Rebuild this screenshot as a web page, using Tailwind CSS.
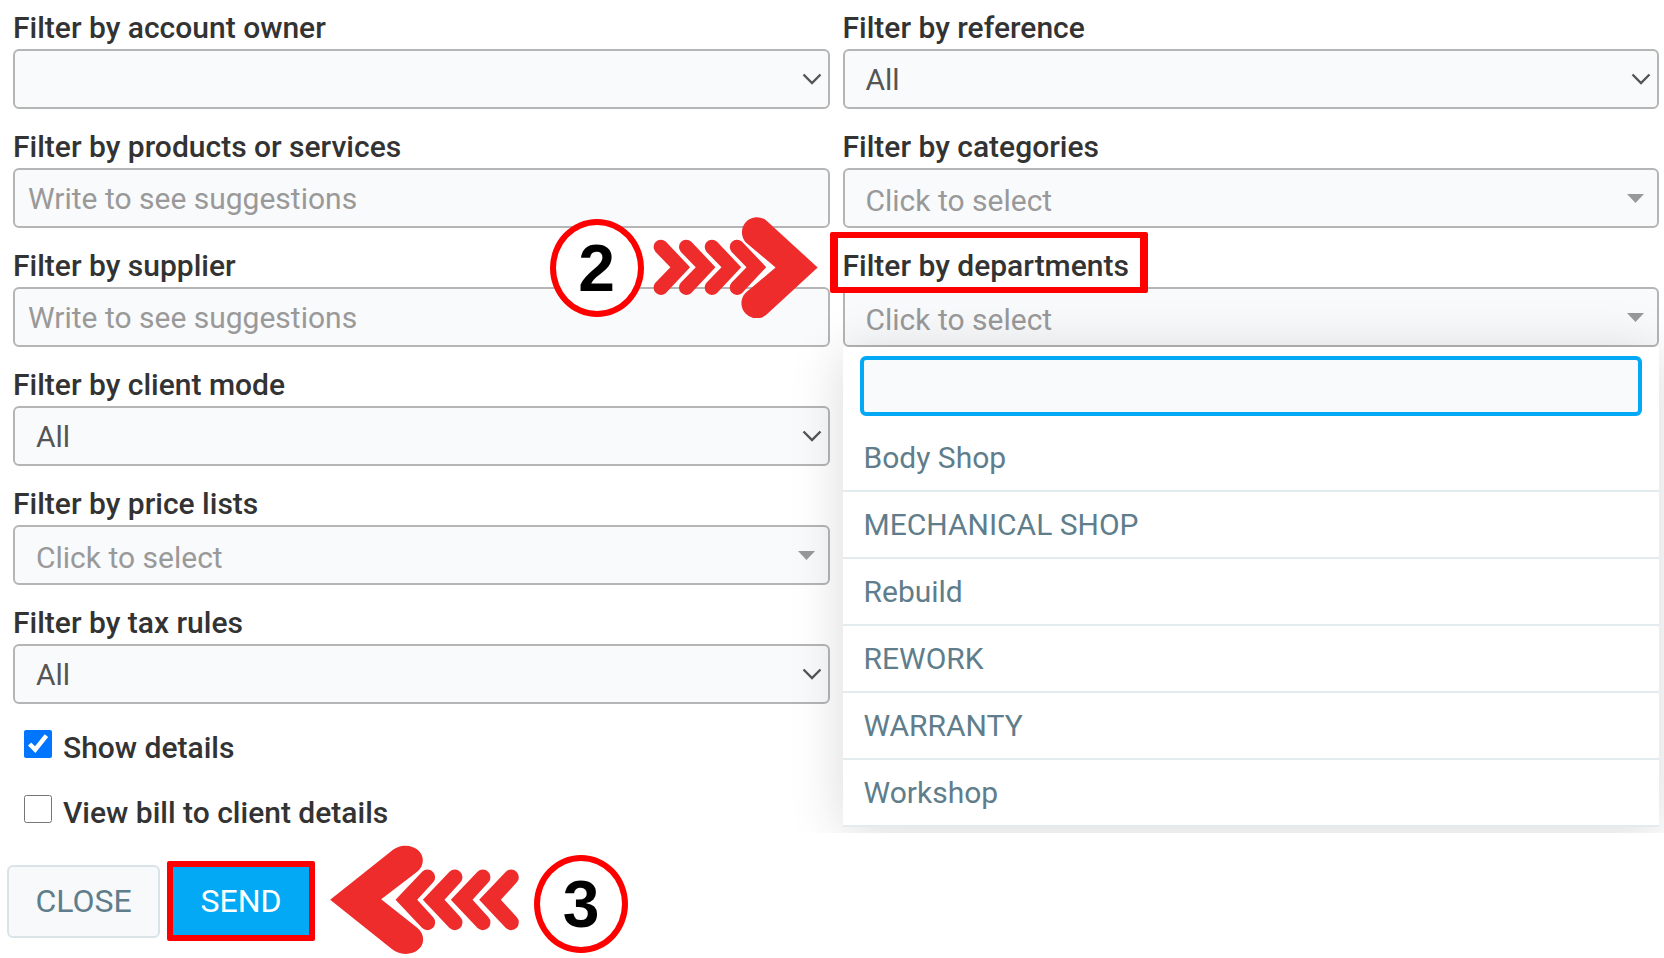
<!DOCTYPE html>
<html lang="en">
  <head>
    <meta charset="UTF-8" />
    <meta name="viewport" content="width=device-width, initial-scale=1.0" />
    <title>Report filters</title>
    <script src="https://cdn.jsdelivr.net/npm/@tailwindcss/browser@4"></script>
  </head>
  <body class="bg-white font-['Roboto',sans-serif] text-[30px] text-[#333333]">
    <!-- Shared shapes -->
    <svg class="hidden">
      <symbol id="chevron" viewBox="0 0 20 12">
        <path d="M1.5 1.5L10 10L18.5 1.5" fill="none" stroke="#555" stroke-width="2.4" />
      </symbol>
      <symbol id="caret" viewBox="0 0 17 9">
        <path d="M0 0H17L8.5 9Z" fill="#999" />
      </symbol>
      <path
        id="dart-right"
        d="M377 123L450 200L377 278A22 22 0 0 1 346 247L391 200L346 154A22 22 0 0 1 377 123Z"
      />
      <path
        id="dart-left"
        d="M258 212L338 128A23 23 0 0 1 371 160L323 212L371 265A23 23 0 0 1 338 297Z"
      />
    </svg>

    <form>
      <div class="overflow-hidden grid grid-cols-2 gap-x-[13px] pt-1.5 pb-2.5 pl-[13px] pr-[5px]">
        <!-- Left column -->
        <div class="flex flex-col gap-4">
          <div>
            <label for="owner" class="block font-medium leading-[43px]">Filter by account owner</label>
            <div class="relative">
              <select
                id="owner"
                class="block w-full h-[60px] appearance-none border-2 border-[#b5b5b5] rounded-md bg-[#f9fafc] px-[21px] text-[#555]"
              >
                <option></option>
              </select>
              <svg class="absolute right-2 top-6 w-5 h-3 pointer-events-none"><use href="#chevron" /></svg>
            </div>
          </div>

          <div>
            <label for="products" class="block font-medium leading-[43px]">Filter by products or services</label>
            <input
              type="text"
              id="products"
              placeholder="Write to see suggestions"
              class="block w-full h-[60px] border-2 border-[#b5b5b5] rounded-md bg-[#f9fafc] px-[13px] placeholder:text-[#999]"
            />
          </div>

          <div>
            <label for="supplier" class="block font-medium leading-[43px]">Filter by supplier</label>
            <input
              type="text"
              id="supplier"
              placeholder="Write to see suggestions"
              class="block w-full h-[60px] border-2 border-[#b5b5b5] rounded-md bg-[#f9fafc] px-[13px] placeholder:text-[#999]"
            />
          </div>

          <div>
            <label for="client-mode" class="block font-medium leading-[43px]">Filter by client mode</label>
            <div class="relative">
              <select
                id="client-mode"
                class="block w-full h-[60px] appearance-none border-2 border-[#b5b5b5] rounded-md bg-[#f9fafc] px-[21px] text-[#555]"
              >
                <option>All</option>
              </select>
              <svg class="absolute right-2 top-6 w-5 h-3 pointer-events-none"><use href="#chevron" /></svg>
            </div>
          </div>

          <div>
            <label for="price-lists" class="block font-medium leading-[43px]">Filter by price lists</label>
            <button
              type="button"
              id="price-lists"
              class="w-full h-[60px] flex items-center justify-between border-2 border-[#b5b5b5] rounded-md bg-[#f9fafc] pl-[21px] pr-[13px] text-[#999]"
            >
              <span class="pt-1">Click to select</span>
              <svg class="w-[17px] h-[9px]"><use href="#caret" /></svg>
            </button>
          </div>

          <div>
            <label for="tax-rules" class="block font-medium leading-[43px]">Filter by tax rules</label>
            <div class="relative">
              <select
                id="tax-rules"
                class="block w-full h-[60px] appearance-none border-2 border-[#b5b5b5] rounded-md bg-[#f9fafc] px-[21px] text-[#555]"
              >
                <option>All</option>
              </select>
              <svg class="absolute right-2 top-6 w-5 h-3 pointer-events-none"><use href="#chevron" /></svg>
            </div>
          </div>

          <div class="flex flex-col gap-[37px] pt-2.5 pl-[11px]">
            <div class="flex items-center gap-[11px] h-7">
              <input type="checkbox" id="show-details" checked class="size-7 accent-[#0075ff]" />
              <label for="show-details" class="font-medium leading-7 pt-2">Show details</label>
            </div>
            <div class="flex items-center gap-[11px] h-7">
              <input type="checkbox" id="bill-to" class="size-7 accent-[#0075ff]" />
              <label for="bill-to" class="font-medium leading-7 pt-2">View bill to client details</label>
            </div>
          </div>
        </div>

        <!-- Right column -->
        <div class="flex flex-col gap-4">
          <div>
            <label for="reference" class="block font-medium leading-[43px]">Filter by reference</label>
            <div class="relative">
              <select
                id="reference"
                class="block w-full h-[60px] appearance-none border-2 border-[#b5b5b5] rounded-md bg-[#f9fafc] px-[21px] text-[#555]"
              >
                <option>All</option>
              </select>
              <svg class="absolute right-2 top-6 w-5 h-3 pointer-events-none"><use href="#chevron" /></svg>
            </div>
          </div>

          <div>
            <label for="categories" class="block font-medium leading-[43px]">Filter by categories</label>
            <button
              type="button"
              id="categories"
              class="w-full h-[60px] flex items-center justify-between border-2 border-[#b5b5b5] rounded-md bg-[#f9fafc] pl-[21px] pr-[13px] text-[#999]"
            >
              <span class="pt-1">Click to select</span>
              <svg class="w-[17px] h-[9px]"><use href="#caret" /></svg>
            </button>
          </div>

          <div class="relative">
            <label for="departments" class="block font-medium leading-[43px]">Filter by departments</label>
            <button
              type="button"
              id="departments"
              aria-expanded="true"
              class="w-full h-[60px] flex items-center justify-between border-2 border-[#b5b5b5] rounded-md bg-[#f9fafc] pl-[21px] pr-[13px] text-[#999]"
            >
              <span class="pt-1">Click to select</span>
              <svg class="w-[17px] h-[9px]"><use href="#caret" /></svg>
            </button>

            <!-- Open department list -->
            <div class="absolute top-full inset-x-0 z-10 bg-white shadow-[0_5px_50px_rgba(0,0,0,0.15)] text-[#607d8b]">
              <div class="py-[9px] px-[17px]">
                <input
                  type="text"
                  aria-label="Search departments"
                  class="block w-full h-[60px] border-4 border-[#03a9f4] rounded-md bg-[#f9fafc] px-3 outline-none"
                />
              </div>
              <ul>
                <li class="h-[67px] border-b-2 border-[#e1ebf0] px-[21px] leading-[65px]">Body Shop</li>
                <li class="h-[67px] border-b-2 border-[#e1ebf0] px-[21px] leading-[65px]">MECHANICAL SHOP</li>
                <li class="h-[67px] border-b-2 border-[#e1ebf0] px-[21px] leading-[65px]">Rebuild</li>
                <li class="h-[67px] border-b-2 border-[#e1ebf0] px-[21px] leading-[65px]">REWORK</li>
                <li class="h-[67px] border-b-2 border-[#e1ebf0] px-[21px] leading-[65px]">WARRANTY</li>
                <li class="h-[67px] border-b-2 border-[#e1ebf0] px-[21px] leading-[65px]">Workshop</li>
              </ul>
            </div>

            <!-- Step 2 marker -->
            <div class="absolute z-20 -left-[13px] -top-3 w-[318px] h-[61px] border-x-8 border-y-6 border-[#ff0000] rounded-xs pointer-events-none"></div>
            <div class="absolute z-20 right-full -top-[27px] mr-[25px] flex items-center gap-[9px] pointer-events-none">
              <div
                class="w-[94px] h-[98px] flex items-center justify-center border-6 border-[#ff0000] rounded-[50%] bg-white font-['Liberation_Sans',sans-serif] font-bold text-[66px] leading-none text-black"
              >
                2
              </div>
              <svg class="w-[165px] h-[101px]" viewBox="339 50 494 302" fill="#ee2c2c">
                <use href="#dart-right" />
                <use href="#dart-right" x="76" />
                <use href="#dart-right" x="153" />
                <use href="#dart-right" x="228" />
                <path d="M679 61L832 201L680 341A45 45 0 0 1 618 275L706 201L618 127A45 45 0 0 1 679 61Z" />
              </svg>
            </div>
          </div>
        </div>
      </div>

      <!-- Actions -->
      <div class="flex items-center gap-[15px] pt-3 pl-[7px]">
        <div class="flex items-center gap-[7px] text-[32px]">
          <button
            type="button"
            class="w-[153px] h-[73px] border-2 border-[#dae4e8] rounded-md bg-[#f7f9fa] text-[#607d8b]"
          >
            CLOSE
          </button>
          <button
            type="submit"
            class="w-[148px] h-20 border-6 border-[#ff0000] rounded-xs bg-[#03a9f4] text-white"
          >
            SEND
          </button>
        </div>
        <!-- Step 3 marker -->
        <svg class="w-[189px] h-28" viewBox="62 48 566 336" fill="#ee2c2c">
          <use href="#dart-left" />
          <use href="#dart-left" x="82" />
          <use href="#dart-left" x="166" />
          <use href="#dart-left" x="251" />
          <path
            d="M62 212L243 68C258 55 272 50 288 50C318 50 340 70 340 93C340 108 334 120 322 129L215 211L324 297C335 307 341 318 341 331C341 355 320 375 288 375C272 374 258 369 247 360Z"
          />
        </svg>
        <div class="pt-1.5">
          <div
            class="w-[94px] h-[98px] flex items-center justify-center border-6 border-[#ff0000] rounded-[50%] bg-white font-['Liberation_Sans',sans-serif] font-bold text-[66px] leading-none text-black"
          >
            3
          </div>
        </div>
      </div>
    </form>
  </body>
</html>
